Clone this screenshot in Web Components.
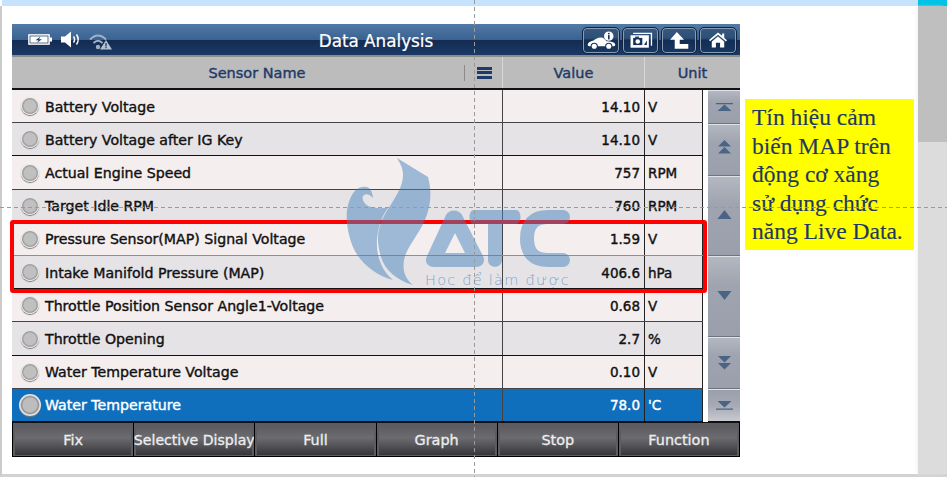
<!DOCTYPE html>
<html lang="vi"><head><meta charset="utf-8"><title>Data Analysis</title>
<style>html,body{margin:0;padding:0;background:#fff;overflow:hidden}</style>
</head><body>
<atc-slide></atc-slide>
<script>
const FONT='"DejaVu Sans",Verdana,sans-serif';
const ICONS={
car:'<svg width="29" height="19" viewBox="0 0 40 26"><path fill="#fff" d="M1 19c0-3 3-5 8-6 3-2 6-4 10-4 4 0 6 3 8 5 5 0 12 1 12 5 0 1-1 2-2 2h-2a5 5 0 0 0-10 0H15a5 5 0 0 0-10 0H3c-1 0-2-1-2-2z"/><circle cx="10" cy="21" r="3.500" fill="#fff"/><circle cx="30" cy="21" r="3.500" fill="#fff"/><circle cx="30" cy="7" r="6.500" fill="#fff"/><rect x="29" y="2.500" width="2.200" height="2" fill="#16335c"/><rect x="29" y="5.500" width="2.200" height="6" fill="#16335c"/></svg>',
camera:'<svg width="24" height="17" viewBox="0 0 36 26"><path fill="none" stroke="#fff" stroke-width="2" d="M6 2h28v19"/><rect x="2" y="5" width="28" height="19" fill="#fff"/><rect x="6" y="9" width="14" height="11" fill="#16335c"/><rect x="9" y="7" width="6" height="2" fill="#16335c"/><circle cx="13" cy="14.500" r="3.500" fill="#fff"/><path fill="#16335c" d="M23 19l4-6v7h-4z"/></svg>',
back:'<svg width="20" height="19" viewBox="0 0 28 26"><path fill="#fff" d="M11 1l10 11h-6v6h12v6.500H8V12H1.500z"/></svg>',
home:'<svg width="20" height="18" viewBox="0 0 28 26"><path fill="#fff" d="M14 2l6 5V3.500h3v6.500l4 3.500-1.500 1.700L14 5.500 2.500 14.700 1 13z"/><path fill="#fff" d="M5 15l9-7 9 7v9h-6v-7h-6v7H5z"/></svg>'};
function def(name,css,html,extra){
  customElements.define(name,class extends HTMLElement{
    constructor(){super();const r=this.attachShadow({mode:'open'});
      r.innerHTML='<style>'+css+'</style>'+(typeof html==='function'?html(this):html);}
    connectedCallback(){if(extra)extra(this);}
  });
}
def('status-icons',':host{display:flex;align-items:center;padding-left:16px}svg{display:block}',`
<svg width="25" height="11" viewBox="0 0 25 11"><rect x=".8" y=".8" width="20.400" height="9.400" fill="#fff" stroke="#fff" stroke-width="1.200"/><rect x="2" y="2" width="18" height="7" fill="#fff" stroke="#16335c" stroke-width=".7"/><rect x="21.500" y="3.500" width="2.500" height="4" fill="#fff"/><path fill="#1c4270" d="M12.500 2.500L7.500 6.200h3l-1.500 2.500 5-3.500h-3z"/></svg>
<svg width="20" height="17" viewBox="0 0 20 17" style="margin-left:8px"><path fill="#fff" d="M0 5.500h4L10 .5v16l-6-5H0z"/><path fill="none" stroke="#fff" stroke-width="1.500" d="M12.500 5.500q2.200 3 0 6M15.500 3.500q3.400 5 0 10"/></svg>
<svg width="24" height="17" viewBox="0 0 24 17" style="margin:3px 0 0 8px"><g fill="none" stroke="#9fb2c8" stroke-width="2"><path d="M1 6.500q8-8 16 0"/><path d="M4.500 10q4.500-4.500 9 0"/></g><circle cx="9" cy="14" r="2.200" fill="#9fb2c8"/><path fill="#b4c2d2" d="M17 7l6 9.500H11z"/><rect x="16.400" y="10" width="1.200" height="3.500" fill="#16335c"/><rect x="16.400" y="14" width="1.200" height="1.200" fill="#16335c"/></svg>`);
def('tool-button',':host{display:flex;align-items:center;justify-content:center;box-sizing:border-box;height:27px;width:var(--w,37px);border:1px solid #12243f;border-radius:5px;box-shadow:inset 0 0 0 1px #8b9bb0;background:linear-gradient(#35587f 0,#2e5076 40%,#132e55 50%,#173762 100%)}svg{display:block}',
 el=>ICONS[el.getAttribute('icon')]);
def('title-bar',`:host{display:grid;grid-template-columns:1fr auto 1fr;align-items:center;height:31px;box-sizing:border-box;
 background:linear-gradient(#537ba7 0,#3a6292 50%,#142b52 52%,#1a3a66 100%);color:#fff;font:16.800px ${FONT};-webkit-text-stroke:.2px #fff}
 .t{padding-top:3px}.r{display:flex;justify-content:flex-end;gap:2px;padding:0 3px 0 0;margin-top:1px}`,
 `<status-icons></status-icons><span class="t">Data Analysis</span><div class="r"><tool-button icon="car" style="--w:38px"></tool-button><tool-button icon="camera"></tool-button><tool-button icon="back" style="--w:36px"></tool-button><tool-button icon="home" style="--w:38px"></tool-button></div>`);
def('head-row',`:host{display:grid;grid-template-columns:491px 142px 95px;height:35px;box-sizing:border-box;background:#bcbcbc;border-top:2px solid #8c8c8c;border-bottom:2px solid #111;color:#1d3a68;font:14.500px ${FONT};-webkit-text-stroke:.4px #1d3a68}
 div{display:flex;align-items:center;justify-content:center;box-sizing:border-box;border-right:1px solid #d8d8d8}
 .n{justify-content:flex-start}
 .lab{width:490px;text-align:center}
 i{display:block;width:1px;height:16px;background:#8a8a8a;margin-left:-38px}
 b{display:block;width:15px;height:12px;margin-left:12px;background:linear-gradient(#1d3a68 0 3px,transparent 3px 4.500px,#1d3a68 4.500px 7.500px,transparent 7.500px 9px,#1d3a68 9px 12px)}
 div:last-child{border:0}`,
 `<div class="n"><span class="lab">Sensor Name</span><i></i><b></b></div><div>Value</div><div>Unit</div>`);
def('sensor-row',`:host{flex:1;display:grid;grid-template-columns:491px 142px 58px 5px 1fr;box-sizing:border-box;min-height:0;background:var(--bg,#f5eeee);color:#111;font:14.150px ${FONT};-webkit-text-stroke:.4px currentColor;border-bottom:1px solid var(--line,#222)}
 :host([sel]){background:#0f6fbd;color:#fff;border-bottom:0}
 .c{display:flex;align-items:center;box-sizing:border-box;white-space:nowrap;padding-top:1px}
 .n{padding-left:9px;gap:6px;border-right:1px solid #444}
 .v{justify-content:flex-end;padding-right:4px;border-right:1px solid #222;font-size:13.500px}
 .u{padding-left:3px;border-right:1px solid #222;font-size:13.500px}
 .gap{background:#fff;margin-bottom:-1px;width:5px}
 .r{width:18px;height:18px;border-radius:50%;flex:none;background:radial-gradient(circle,#c0c0c0 0 45%,#9b9b9b 58%,#e9e9e9 66%,#bdbdbd 100%);box-shadow:0 1px 1px #777;margin-top:-1px}
 :host([sel]) .r{width:22px;height:22px;margin:-1px -2px 0;background:radial-gradient(circle,#bdbdbd 0 45%,#8e8e8e 54%,#e7e7e7 64%,#c9c9c9 100%)}`,
 el=>`<div class="c n"><span class="r"></span><span>${el.getAttribute('name')}</span></div><div class="c v">${el.getAttribute('value')}</div><div class="c u">${el.getAttribute('unit')}</div><div class="gap"></div>`);
def('scroll-btn',`:host{display:flex;align-items:center;justify-content:center;box-sizing:border-box;width:32px;background:linear-gradient(#b3b7c0,#9fa4b0 35%,#9a9fac);border-top:1px solid #dfe2e8;border-bottom:1px solid #70747e}
 :host([last]){background:linear-gradient(#9a9fac,#a6aab4 50%,#c9c9d0);border-bottom:0}svg{display:block}`,
 el=>{const k=el.getAttribute('k');const c='#4a6486';const s={
  top:`<path fill="${c}" d="M2 6h17v1.300H2zM10.500 7.500l7 6.500h-14z"/>`,
  up2:`<path fill="${c}" d="M10.500 0l6.500 6.500H4zM10.500 7l6.500 6.500H4z"/>`,
  up:`<path fill="${c}" d="M10.500 4l7 9h-14z"/>`,
  dn:`<path fill="${c}" d="M3.500 4h14l-7 9z"/>`,
  dn2:`<path fill="${c}" d="M4 3h13l-6.500 6.500zM4 10h13l-6.500 6.500z"/>`,
  bot:`<path fill="${c}" d="M3.500 5h14l-7 6.500zM2 12.500h17v1.300H2z"/>`}[k];
  return `<svg width="21" height="20" viewBox="0 0 21 20">${s}</svg>`});
def('scroll-col',':host{display:flex;flex-direction:column;position:absolute;right:0;top:0;bottom:0;width:32px}',
 `<scroll-btn k="top" style="height:34px"></scroll-btn><scroll-btn k="up2" style="height:52px"></scroll-btn><scroll-btn k="up" style="height:80px"></scroll-btn><scroll-btn k="dn" style="height:81px"></scroll-btn><scroll-btn k="dn2" style="height:52px"></scroll-btn><scroll-btn k="bot" last style="flex:1"></scroll-btn>`);
const rows=[['Battery Voltage','14.10','V'],['Battery Voltage after IG Key','14.10','V'],['Actual Engine Speed','757','RPM'],['Target Idle RPM','760','RPM'],['Pressure Sensor(MAP) Signal Voltage','1.59','V'],['Intake Manifold Pressure (MAP)','406.6','hPa'],['Throttle Position Sensor Angle1-Voltage','0.68','V'],['Throttle Opening','2.7','%'],['Water Temperature Voltage','0.10','V'],['Water Temperature','78.0',"'C"]];
def('sensor-table',':host{display:flex;flex-direction:column;height:331px;position:relative;background:#fff}',
 rows.map((r,i)=>`<sensor-row name="${r[0]}" value="${r[1]}" unit="${r[2]}" style="--bg:${i%2?'#e6e3e7':'#f5eeee'};--line:${i==4?'#8f8f8f':i%2?'#111':'#444'}"${i==9?' sel':''}></sensor-row>`).join('')+'<scroll-col></scroll-col>');
def('fn-button',`:host{flex:1;display:flex;align-items:center;justify-content:center;overflow:hidden;white-space:nowrap;box-sizing:border-box;min-width:0;border-left:1px solid #000;box-shadow:inset 0 1px 0 2px #5d5d61;background:linear-gradient(#58585c,#6c6c70 45%,#48484c 80%,#333337);color:#eee;font:14.400px ${FONT};-webkit-text-stroke:.3px #eee;padding-top:1px}:host(:first-child){border-left:0}`,'<slot></slot>');
def('fn-bar',':host{display:flex;height:36px;box-sizing:border-box;background:#000;border-top:2px solid #111;border-left:1px solid #000;border-bottom:1px solid #000;border-right:1px solid #000}','<slot></slot>');
def('scan-app',':host{display:block;width:728px;flex:none}',`<title-bar></title-bar><head-row></head-row><sensor-table></sensor-table><fn-bar><fn-button>Fix</fn-button><fn-button style="font-size:14.100px">Selective Display</fn-button><fn-button>Full</fn-button><fn-button>Graph</fn-button><fn-button>Stop</fn-button><fn-button>Function</fn-button></fn-bar>`);
def('note-box',':host{display:block;box-sizing:border-box;width:169px;height:151px;margin:75px 0 0 5px;padding:4px 0 0 7px;background:#ff0;color:#1f3864;font:23.500px/28.500px "Liberation Serif","Times New Roman",serif;-webkit-text-stroke:.15px #1f3864;flex:none;white-space:nowrap}','<slot></slot>');
def('atc-watermark',`:host{position:absolute;left:0;top:0;width:947px;height:477px;pointer-events:none}
 svg{position:absolute;left:0;top:0}
 span{position:absolute;left:425px;top:270px;font:200 14.500px/20px "DejaVu Sans",sans-serif;color:rgba(69,132,190,.7);letter-spacing:1.250px;white-space:nowrap}`,
 `<svg width="947" height="477" viewBox="0 0 947 477" fill="rgb(69,132,190)" fill-opacity=".5">
 <path d="M397 158L428 177C432 192 431 205 425 220C418 235 409 245 405 256C402 267 403 277 413 285C396 280 385 270 381 257C376 240 377 228 385 214C395 198 403 187 403 175C403 168 400 163 397 158Z"/>
 <path d="M362 187C368 186 372 188 373 198C370 195 367 193 364 195C361 198 363 203 368 206C375 209 381 208 388 208C381 217 378 228 377 240C376 255 381 270 393 280C375 275 360 263 353 247C347 232 346 218 347 210C349 198 354 188 362 187Z"/>
 <path fill-rule="evenodd" d="M446 215C449 209 459 209 462 215L483 256C486 262 482 267 476 267H434C428 267 424 262 427 256ZM455 233L445 253H465Z"/>
 <path d="M474 210H516C522 210 522 224 516 224H502V260C502 269 488 269 488 260V224H474C468 224 468 210 474 210Z"/>
 <path fill="none" stroke="rgb(69,132,190)" stroke-opacity=".5" stroke-width="14" stroke-linecap="round" d="M563 217H548Q527 217 527 238.500Q527 260 548 260H563"/></svg><span>Học để làm được</span>`);
def('red-frame',':host{position:absolute;left:10px;top:220px;width:697px;height:73px;box-sizing:border-box;border:4px solid #f00;border-radius:3px}','');
def('guide-lines',`:host{position:absolute;left:0;top:0;width:947px;height:477px;pointer-events:none}
 .h{position:absolute;left:0;right:0;top:207px;height:1px;background:repeating-linear-gradient(90deg,#9a9a9a 0 4px,transparent 4px 7px)}
 .v{position:absolute;top:0;bottom:0;left:474px;width:1px;background:repeating-linear-gradient(#9a9a9a 0 4px,transparent 4px 7px)}`,'<div class="h"></div><div class="v"></div>');
def('side-scroll',':host{display:block;width:29px;flex:none;margin-left:auto;background:linear-gradient(#bfbfbf 0 136px,#dcdcdc 136px);box-shadow:-3px 0 3px -1px #f5f5f5}','');
def('atc-slide',`:host{display:flex;flex-direction:column;position:relative;width:947px;height:477px;box-sizing:border-box;font-family:${FONT};overflow:hidden}
 .top{height:6px;flex:none;display:flex;margin-left:2px;background:#c5e3fd}.top i{display:block;width:29px;margin-left:auto;background:#00c3e6}
 .main{flex:1;display:flex;min-height:0;border-left:2px solid #ccc;border-bottom:3px solid #d2d2d2}
 .page{flex:1;display:flex;padding:18px 0 0 10px;min-width:0}`,
 `<div class="top"><i></i></div><div class="main"><div class="page"><scan-app></scan-app><note-box>Tín hiệu cảm<br>biến MAP trên<br>động cơ xăng<br>sử dụng chức<br>năng Live Data.</note-box></div><side-scroll></side-scroll></div><red-frame></red-frame><atc-watermark></atc-watermark><guide-lines></guide-lines>`);
</script>
</body></html>
